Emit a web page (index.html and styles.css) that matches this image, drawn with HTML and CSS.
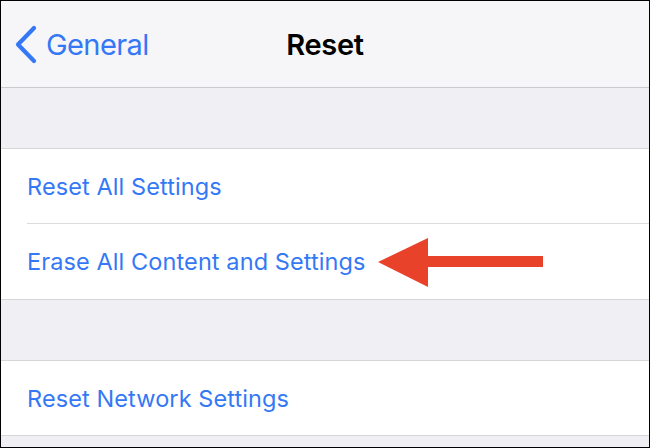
FILE: index.html
```html
<!DOCTYPE html>
<html>
<head>
<meta charset="utf-8">
<link rel="stylesheet" href="styles.css">
</head>
<body>
<div class="screen">
  <header class="nav">
    <div class="back">
      <svg class="chev" width="26" height="40" viewBox="0 0 26 40"><path d="M20 3 L4 19.5 L20 36" fill="none" stroke="#3478f6" stroke-width="4.2" stroke-linecap="round" stroke-linejoin="round"/></svg>
      <span class="back-label">General</span>
    </div>
    <div class="title">Reset</div>
    <div class="spacer"></div>
  </header>
  <div class="gap"></div>
  <section class="group">
    <div class="row">Reset All Settings</div>
    <div class="row">Erase All Content and Settings
      <svg class="arrow" width="170" height="52" viewBox="0 0 170 52"><polygon points="0,24 50,0 50,18 165,18 165,29 50,29 50,49" fill="#e8432a"/></svg>
    </div>
  </section>
  <div class="gap"></div>
  <section class="group">
    <div class="row">Reset Network Settings</div>
  </section>
  <div class="tail"></div>
</div>
</body>
</html>
```
FILE: styles.css
```css
html, body { margin: 0; padding: 0; background: #000; }
.screen {
  width: 650px; height: 448px; box-sizing: border-box;
  border: 1px solid #000; background: #efeff4;
  font-family: Inter, "Noto Sans", sans-serif;
  display: flex; flex-direction: column; overflow: hidden;
}
.nav {
  height: 86px; background: #f6f6f8; border-bottom: 1px solid #c9c9ce;
  display: grid; grid-template-columns: 1fr auto 1fr; align-items: center;
  flex: none;
}
.back { display: flex; align-items: center; padding-left: 13px; color: #3478f6; }
.chev { display: block; margin-top: 2px; }
.back-label { font-size: 29px; margin-left: 6px; letter-spacing: -0.6px; }
.title { font-size: 29px; font-weight: 600; color: #000; letter-spacing: -0.3px; }
.gap { height: 60px; border-bottom: 1px solid #d6d6da; flex: none; }
.group { background: #fff; border-bottom: 1px solid #d6d6da; flex: none; }
.row {
  position: relative; height: 74px; margin-left: 26px;
  display: flex; align-items: center;
  font-size: 23.5px; color: #3478f6; letter-spacing: 0.1px;
}
.row + .row { border-top: 1px solid #dcdce0; height: 75px; }
.arrow { position: absolute; left: 351px; top: 14px; }
.tail { flex: 1; }
```
